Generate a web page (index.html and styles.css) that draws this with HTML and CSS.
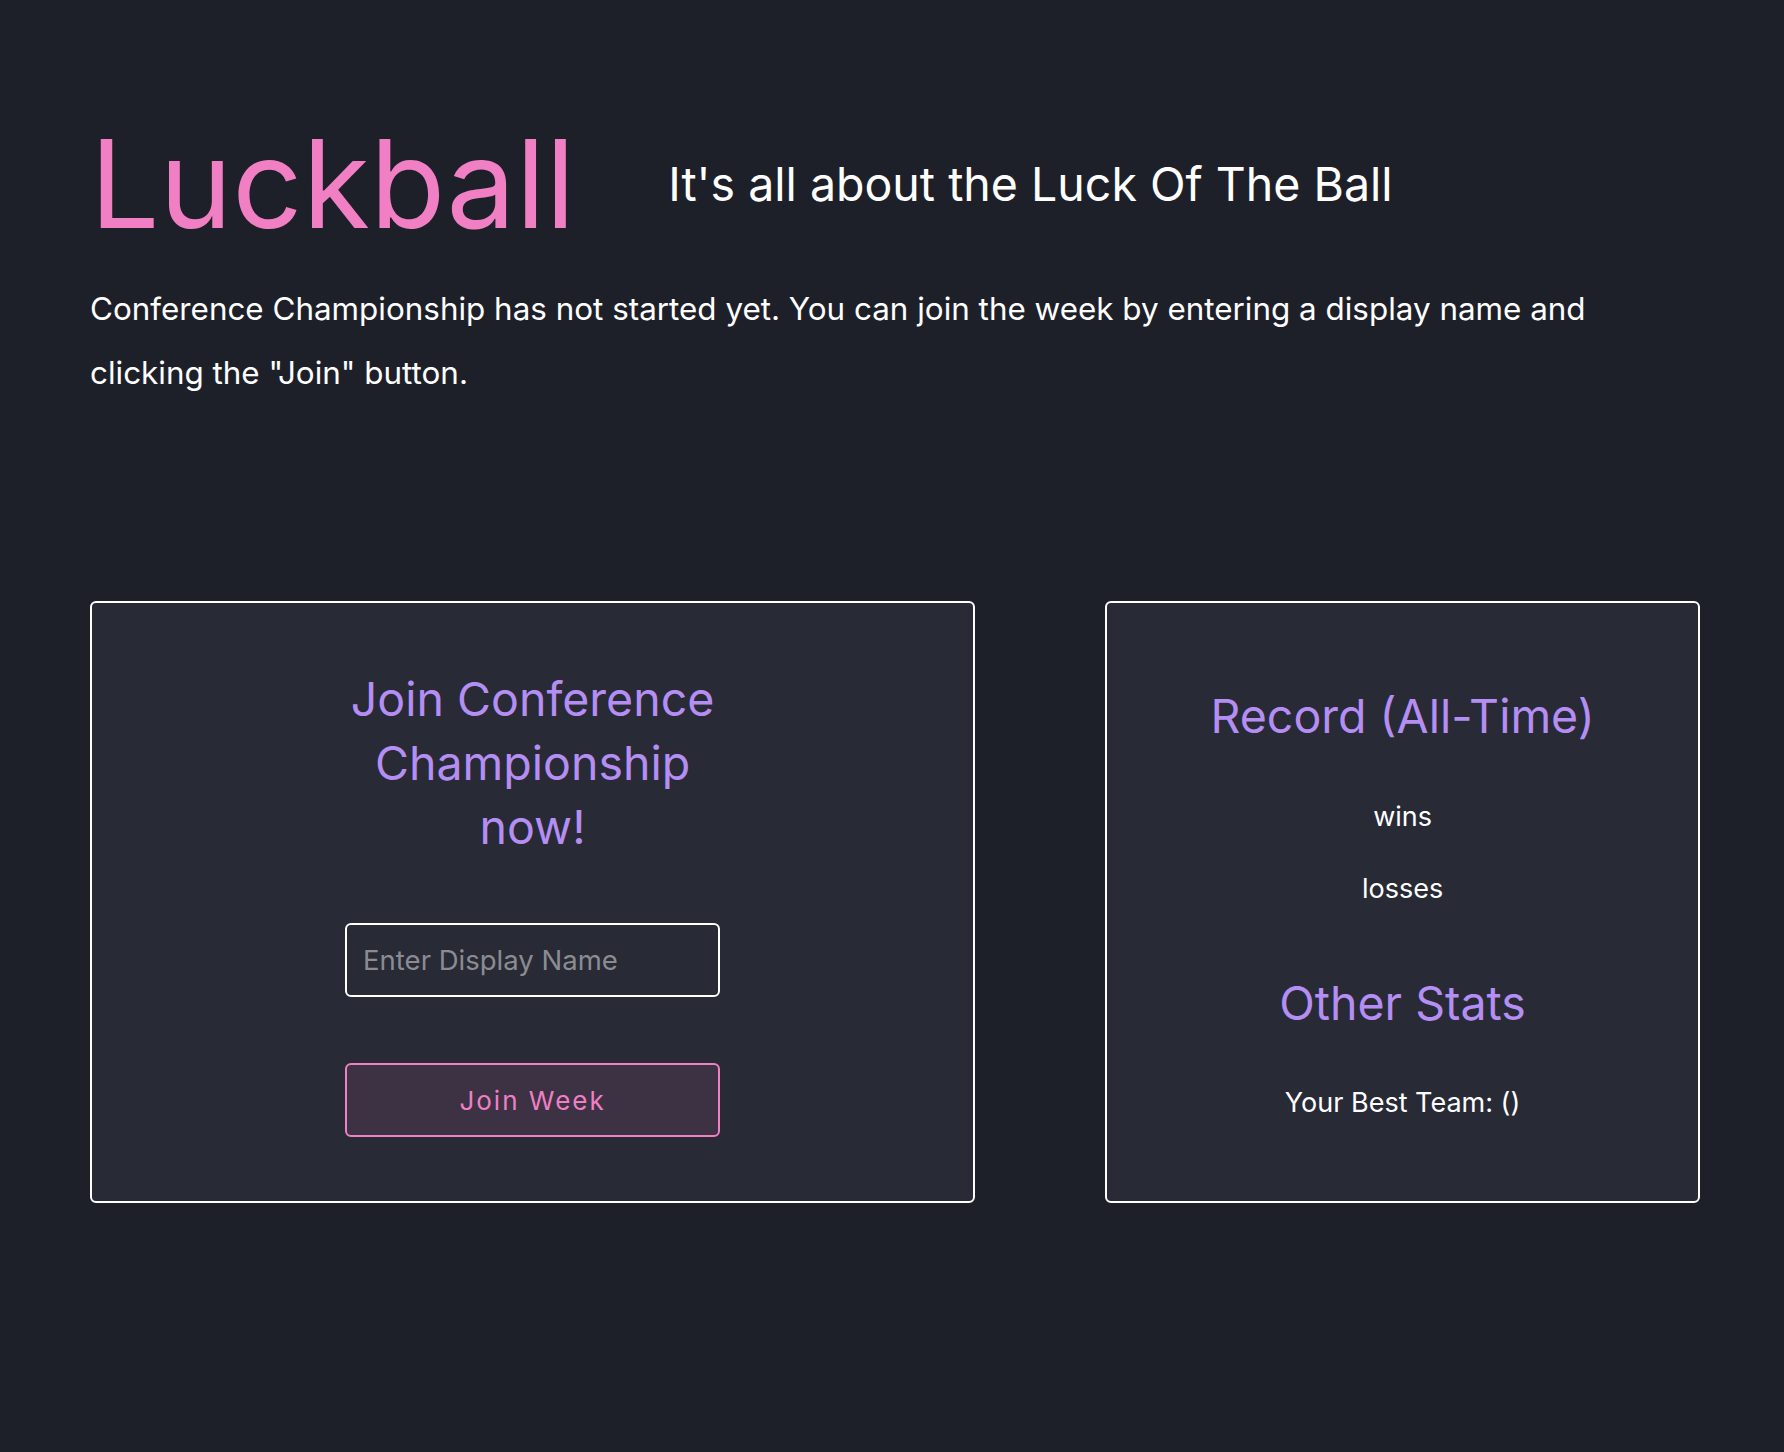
FILE: index.html
```html
<!DOCTYPE html>
<html lang="en">
<head>
    <meta charset="UTF-8">
    <meta name="viewport" content="width=device-width, initial-scale=1.0">
    <title>Luckball</title>
    <link rel="stylesheet" href="styles.css">
</head>
<body>
    <div class="page">
        <header class="header">
            <h1 class="logo">Luckball</h1>
            <span class="tagline">It's all about the Luck Of The Ball</span>
        </header>
        <p class="intro">Conference Championship has not started yet. You can join the week by entering a display name and clicking the "Join" button.</p>

        <div class="cards">
            <section class="card join">
                <h2 class="card-title">Join Conference Championship now!</h2>
                <input class="name-input" type="text" placeholder="Enter Display Name">
                <button class="join-btn" type="button">Join Week</button>
            </section>
            <section class="card stats">
                <h2 class="card-title">Record (All-Time)</h2>
                <p class="stat wins">wins</p>
                <p class="stat">losses</p>
                <h2 class="card-title other">Other Stats</h2>
                <p class="stat best">Your Best Team: ()</p>
            </section>
        </div>
    </div>
</body>
</html>
```

FILE: styles.css
```css
html, body {
    margin: 0;
    padding: 0;
}
body {
    background-color: #1e2029;
    color: #fff;
    font-family: Inter, "Noto Sans", sans-serif;
}
.page {
    padding: 0 84px 0 90px;
}
.header {
    display: flex;
    align-items: center;
    gap: 93px;
    padding-top: 122px;
}
.logo {
    margin: 0;
    font-size: 123px;
    font-weight: 400;
    line-height: 1;
    color: #f07fc4;
}
.tagline {
    font-size: 46.5px;
}
.intro {
    margin: 32px 0 0;
    font-size: 31.4px;
    line-height: 64px;
    max-width: 1540px;
}
.cards {
    display: grid;
    grid-template-columns: 884fr 594fr;
    gap: 130px;
    margin-top: 196px;
}
.card {
    display: flex;
    flex-direction: column;
    align-items: center;
    justify-content: center;
    box-sizing: border-box;
    padding: 64px 0;
    background-color: #282a36;
    border: 2px solid #fff;
    border-radius: 6px;
    text-align: center;
}
.card-title {
    margin: 0;
    font-size: 46.5px;
    font-weight: 400;
    line-height: 64px;
    color: #b48ef2;
}
.join .card-title {
    width: 420px;
}
.name-input {
    box-sizing: border-box;
    width: 375px;
    height: 74px;
    margin-top: 64px;
    padding: 0 16px;
    background: transparent;
    border: 2px solid #fff;
    border-radius: 6px;
    color: #fff;
    font-family: inherit;
    font-size: 27.5px;
    outline: none;
}
.name-input::placeholder {
    color: #8b8c91;
}
.join-btn {
    box-sizing: border-box;
    width: 375px;
    height: 74px;
    margin-top: 66px;
    background-color: rgba(255, 121, 198, 0.1);
    border: 2px solid #f07fc4;
    border-radius: 6px;
    color: #f07fc4;
    font-family: inherit;
    font-size: 26px;
    letter-spacing: 2px;
}
.stat {
    margin: 36px 0 0;
    font-size: 27px;
    line-height: 36px;
}
.stat.wins {
    margin-top: 51px;
}
.other {
    margin-top: 64px;
}
.best {
    margin-top: 50px;
}
```
